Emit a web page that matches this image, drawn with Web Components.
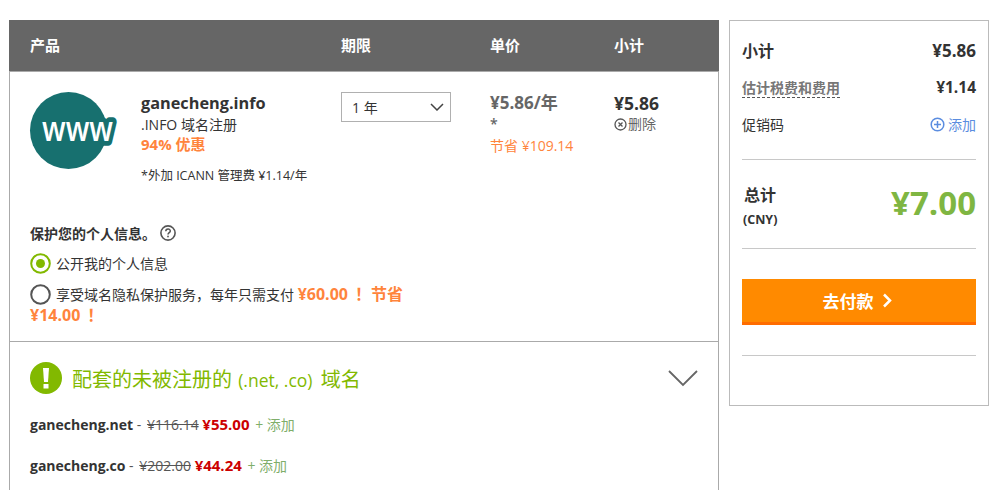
<!DOCTYPE html>
<html lang="zh">
<head>
<meta charset="utf-8">
<title>购物车</title>
<style>
	html, body { margin: 0; height: 490px; overflow: hidden; background: #fff; }
	body {
		font-family: "Open Sans", "Noto Sans CJK SC", sans-serif;
		color: #333;
	}
	#page {
		display: flex;
		align-items: flex-start;
		gap: 10px;
		padding: 20px 0 0 9px;
	}
</style>
</head>
<body>

<div id="page">
	<cart-panel>
		<cart-item></cart-item>
		<privacy-options></privacy-options>
		<domain-offers></domain-offers>
	</cart-panel>
	<order-summary></order-summary>
</div>

<script>
// panel de la izquierda: cabecera gris y lo que le metan dentro
class cartPanel extends HTMLElement {
	constructor() {
		super();
		let shadow = this.attachShadow({mode : 'open'});
		shadow.innerHTML = `
			<style>
				:host {
					display: block;
					width: 708px;
					height: 470px;
					border-right: 1px solid #aaa;
					border-left: 1px solid #aaa;
				}
				#head {
					display: grid;
					grid-template-columns: 311px 149px 124px 1fr;
					align-items: center;
					box-sizing: border-box;
					height: 52px;
					background: #666;
					border-bottom: 1px solid #aaa;
					margin: 0 -1px 0 -1px;
					padding: 0 0 3px 21px;
					color: #fff;
					font-size: 15px;
					font-weight: 700;
				}
			</style>
			<div id="head">
				<span>产品</span><span>期限</span><span>单价</span><span>小计</span>
			</div>
			<slot></slot>
		`;
	}
}

class cartItem extends HTMLElement {
	constructor() {
		super();
		let shadow = this.attachShadow({mode : 'open'});
		shadow.innerHTML = `
			<style>
				:host {
					display: grid;
					grid-template-columns: 311px 149px 124px 1fr;
					padding: 20px 0 0 20px;
					height: 128px;
				}
				#product { display: flex; gap: 21px; }
				#logo { width: 90px; height: 78px; flex: none; overflow: visible; }
				#logo text {
					font-family: "Open Sans", sans-serif;
					font-size: 29px;
					font-weight: 600;
					fill: #fff;
					stroke: #17706f;
					stroke-width: 8px;
					stroke-linejoin: round;
					paint-order: stroke;
				}
				#name { font-size: 16.300px; font-weight: 700; line-height: 22px; color: #333; }
				.sub { font-size: 14px; line-height: 20px; margin-top: 1px; }
				#off { font-size: 15px; font-weight: 700; line-height: 19px; color: #ff843c; }
				#fee { font-size: 12.500px; line-height: 18px; margin-top: 13px; }
				#term {
					display: flex;
					align-items: center;
					justify-content: space-between;
					box-sizing: border-box;
					width: 110px;
					height: 30px;
					padding: 0 6px 0 10px;
					border: 1px solid #b0b0b0;
					font-size: 14px;
				}
				#unit { font-size: 17px; font-weight: 700; line-height: 22px; color: #666; }
				#star { font-size: 14px; font-weight: 600; line-height: 20px; color: #666; }
				#save { font-size: 14px; line-height: 24px; color: #ff843c; }
				#total { font-size: 17.500px; font-weight: 700; line-height: 22px; color: #333; }
				#del { display: flex; align-items: center; gap: 1px; font-size: 14px; line-height: 20px; color: #666; }
			</style>
			<div id="product">
				<svg id="logo" viewBox="0 0 90 78">
					<circle cx="38.500" cy="38.500" r="38.500" fill="#17706f"/>
					<text transform="translate(12 49) scale(1 1.200)">www</text>
				</svg>
				<div>
					<div id="name">ganecheng.info</div>
					<div class="sub">.INFO 域名注册</div>
					<div id="off">94% 优惠</div>
					<div id="fee">*外加 ICANN 管理费 ¥1.14/年</div>
				</div>
			</div>
			<div>
				<div id="term">
					<span>1 年</span>
					<svg width="14" height="8" viewBox="0 0 14 8"><path d="M1 1l6 6 6-6" fill="none" stroke="#444" stroke-width="1.500"/></svg>
				</div>
			</div>
			<div>
				<div id="unit">¥5.86/年</div>
				<div id="star">*</div>
				<div id="save">节省 ¥109.14</div>
			</div>
			<div>
				<div id="total">¥5.86</div>
				<div id="del">
					<svg width="13" height="13" viewBox="0 0 13 13"><circle cx="6.500" cy="6.500" r="5.500" fill="none" stroke="#555" stroke-width="1.300"/><path d="M4.500 4.500l4 4m0-4l-4 4" stroke="#555" stroke-width="1.300"/></svg>
					<span>删除</span>
				</div>
			</div>
		`;
	}
}

class radioLine extends HTMLElement {
	constructor() {
		super();
		let shadow = this.attachShadow({mode : 'open'});
		let on = this.hasAttribute('checked');
		shadow.innerHTML = `
			<style>
				:host { display: inline; font-size: 14px; }
				svg { width: 21px; height: 21px; vertical-align: -5px; margin-right: 5px; }
			</style>
			<svg viewBox="0 0 21 21">
				<circle cx="10.500" cy="10.500" r="9.300" fill="none" stroke="${on ? '#82b900' : '#555'}" stroke-width="2"/>
				${on ? '<circle cx="10.500" cy="10.500" r="4.500" fill="#82b900"/>' : ''}
			</svg><slot></slot>
		`;
	}
}
customElements.define('radio-line', radioLine);

class privacyOptions extends HTMLElement {
	constructor() {
		super();
		let shadow = this.attachShadow({mode : 'open'});
		shadow.innerHTML = `
			<style>
				:host {
					display: block;
					box-sizing: border-box;
					height: 122px;
					padding: 1px 288px 0 20px;
					border-bottom: 1px solid #aaa;
				}
				#title {
					display: flex;
					align-items: center;
					gap: 4px;
					height: 24px;
					font-size: 14px;
					font-weight: 700;
					margin-bottom: 8px;
				}
				.opt { line-height: 21px; margin-bottom: 10px; }
				.opt:last-child { margin-bottom: 0; }
				b { font-size: 16px; font-weight: 700; color: #ff843c; }
				.bang { margin-left: 7px; }
			</style>
			<div id="title">
				<span>保护您的个人信息。</span>
				<svg width="16" height="16" viewBox="0 0 16 16">
					<circle cx="8" cy="8" r="7.100" fill="none" stroke="#555" stroke-width="1.600"/>
					<path d="M5.800 6.300c0-3 4.500-3 4.500-.3 0 1.700-2.300 1.700-2.300 3.500" fill="none" stroke="#555" stroke-width="1.500"/>
					<rect x="7.200" y="10.700" width="1.600" height="1.600" fill="#555"/>
				</svg>
			</div>
			<div class="opt"><radio-line checked>公开我的个人信息</radio-line></div>
			<div class="opt"><radio-line>享受域名隐私保护服务，每年只需支付 <b>¥60.00<span class="bang">！</span>节省</b> <b>¥14.00<span class="bang">！</span></b></radio-line></div>
		`;
	}
}

class domainOffers extends HTMLElement {
	constructor() {
		super();
		let shadow = this.attachShadow({mode : 'open'});
		shadow.innerHTML = `
			<style>
				:host { display: block; padding: 20px 20px 0 20px; }
				#title {
					display: flex;
					align-items: center;
					gap: 10px;
					height: 32px;
					margin-bottom: 19px;
					font-size: 20px;
					color: #82b900;
				}
				#title span { flex: 1; }
				#title small { font-size: 17.500px; margin: 0 3px 0 1px; }
				.row { font-size: 14px; line-height: 22px; margin-bottom: 18px; color: #555; }
				.row b { font-weight: 700; color: #333; }
				.row s { color: #555; margin-left: 2px; }
				.row em { font-style: normal; font-size: 15px; font-weight: 700; color: #c00; }
				.row i { font-style: normal; font-size: 14px; color: #7fae6a; margin-left: 2px; }
			</style>
			<div id="title">
				<svg width="32" height="32" viewBox="0 0 32 32">
					<circle cx="16" cy="16" r="16" fill="#82b900"/>
					<path d="M13 6h6l-1 14h-4z" fill="#fff"/>
					<rect x="13.500" y="22" width="5" height="4.500" fill="#fff"/>
				</svg>
				<span>配套的未被注册的 <small>(.net, .co)</small> 域名</span>
				<svg width="30" height="17" viewBox="0 0 30 17"><path d="M1 1l14 14 14-14" fill="none" stroke="#666" stroke-width="1.800"/></svg>
			</div>
			<div class="row"><b>ganecheng.net</b> - <s>¥116.14</s> <em>¥55.00</em> <i>+ 添加</i></div>
			<div class="row"><b>ganecheng.co</b> - <s>¥202.00</s> <em>¥44.24</em> <i>+ 添加</i></div>
		`;
	}
}

class orderSummary extends HTMLElement {
	constructor() {
		super();
		let shadow = this.attachShadow({mode : 'open'});
		shadow.innerHTML = `
			<style>
				:host {
					display: block;
					box-sizing: border-box;
					width: 260px;
					height: 386px;
					padding: 18px 12px 0 12px;
					border: 1px solid #bbb;
				}
				.line { display: flex; justify-content: space-between; align-items: center; }
				#sub { font-size: 16px; font-weight: 700; height: 22px; color: #333; }
				#sub span:last-child { font-size: 17px; }
				#tax { font-size: 15.500px; font-weight: 700; height: 24px; margin-top: 15px; color: #333; }
				#tax span:first-child {
					font-size: 14px;
					font-weight: 600;
					color: #777;
					border-bottom: 1px dashed #555;
					line-height: 15px;
					padding-bottom: 2px;
					margin-top: 1px;
				}
				#tax span:last-child { margin-top: -2px; }
				#promo { font-size: 14px; height: 22px; margin-top: 13px; padding-bottom: 24px; border-bottom: 1px solid #c8c8c8; }
				#add { display: flex; align-items: center; gap: 3px; color: #5b8de0; }
				#sum { height: 88px; border-bottom: 1px solid #c8c8c8; padding: 0 0 0 2px; }
				#sum b { display: block; font-size: 16px; font-weight: 700; line-height: 24px; margin-top: 6px; }
				#sum small { display: block; font-size: 12.500px; font-weight: 700; line-height: 22px; margin: 2px 0 0 -1px; }
				#amount { font-size: 33px; font-weight: 700; color: #7fb642; margin-top: -3px; }
				#pay {
					display: flex;
					align-items: center;
					justify-content: center;
					gap: 8px;
					box-sizing: border-box;
					height: 46px;
					margin-top: 30px;
					padding-right: 3px;
					background: #ff8a00;
					border-bottom: 3px solid #ff6c00;
					color: #fff;
					font-size: 17px;
					font-weight: 700;
				}
				#rule { height: 30px; border-bottom: 1px solid #c8c8c8; }
			</style>
			<div id="sub" class="line"><span>小计</span><span>¥5.86</span></div>
			<div id="tax" class="line"><span>估计税费和费用</span><span>¥1.14</span></div>
			<div id="promo" class="line">
				<span>促销码</span>
				<span id="add">
					<svg width="15" height="15" viewBox="0 0 15 15"><circle cx="7.500" cy="7.500" r="6.300" fill="none" stroke="#5b8de0" stroke-width="1.500"/><path d="M4 7.500h7M7.500 4v7" stroke="#5b8de0" stroke-width="1.500"/></svg>
					添加
				</span>
			</div>
			<div id="sum" class="line">
				<div><b>总计</b><small>(CNY)</small></div>
				<div id="amount">¥7.00</div>
			</div>
			<div id="pay">
				<span>去付款</span>
				<svg width="11" height="15" viewBox="0 0 11 15"><path d="M2 1.500l6 6-6 6" fill="none" stroke="#fff" stroke-width="2.500"/></svg>
			</div>
			<div id="rule"></div>
		`;
	}
}

window.customElements.define('cart-panel', cartPanel);
window.customElements.define('cart-item', cartItem);
window.customElements.define('privacy-options', privacyOptions);
window.customElements.define('domain-offers', domainOffers);
window.customElements.define('order-summary', orderSummary);
</script>
</body>
</html>
